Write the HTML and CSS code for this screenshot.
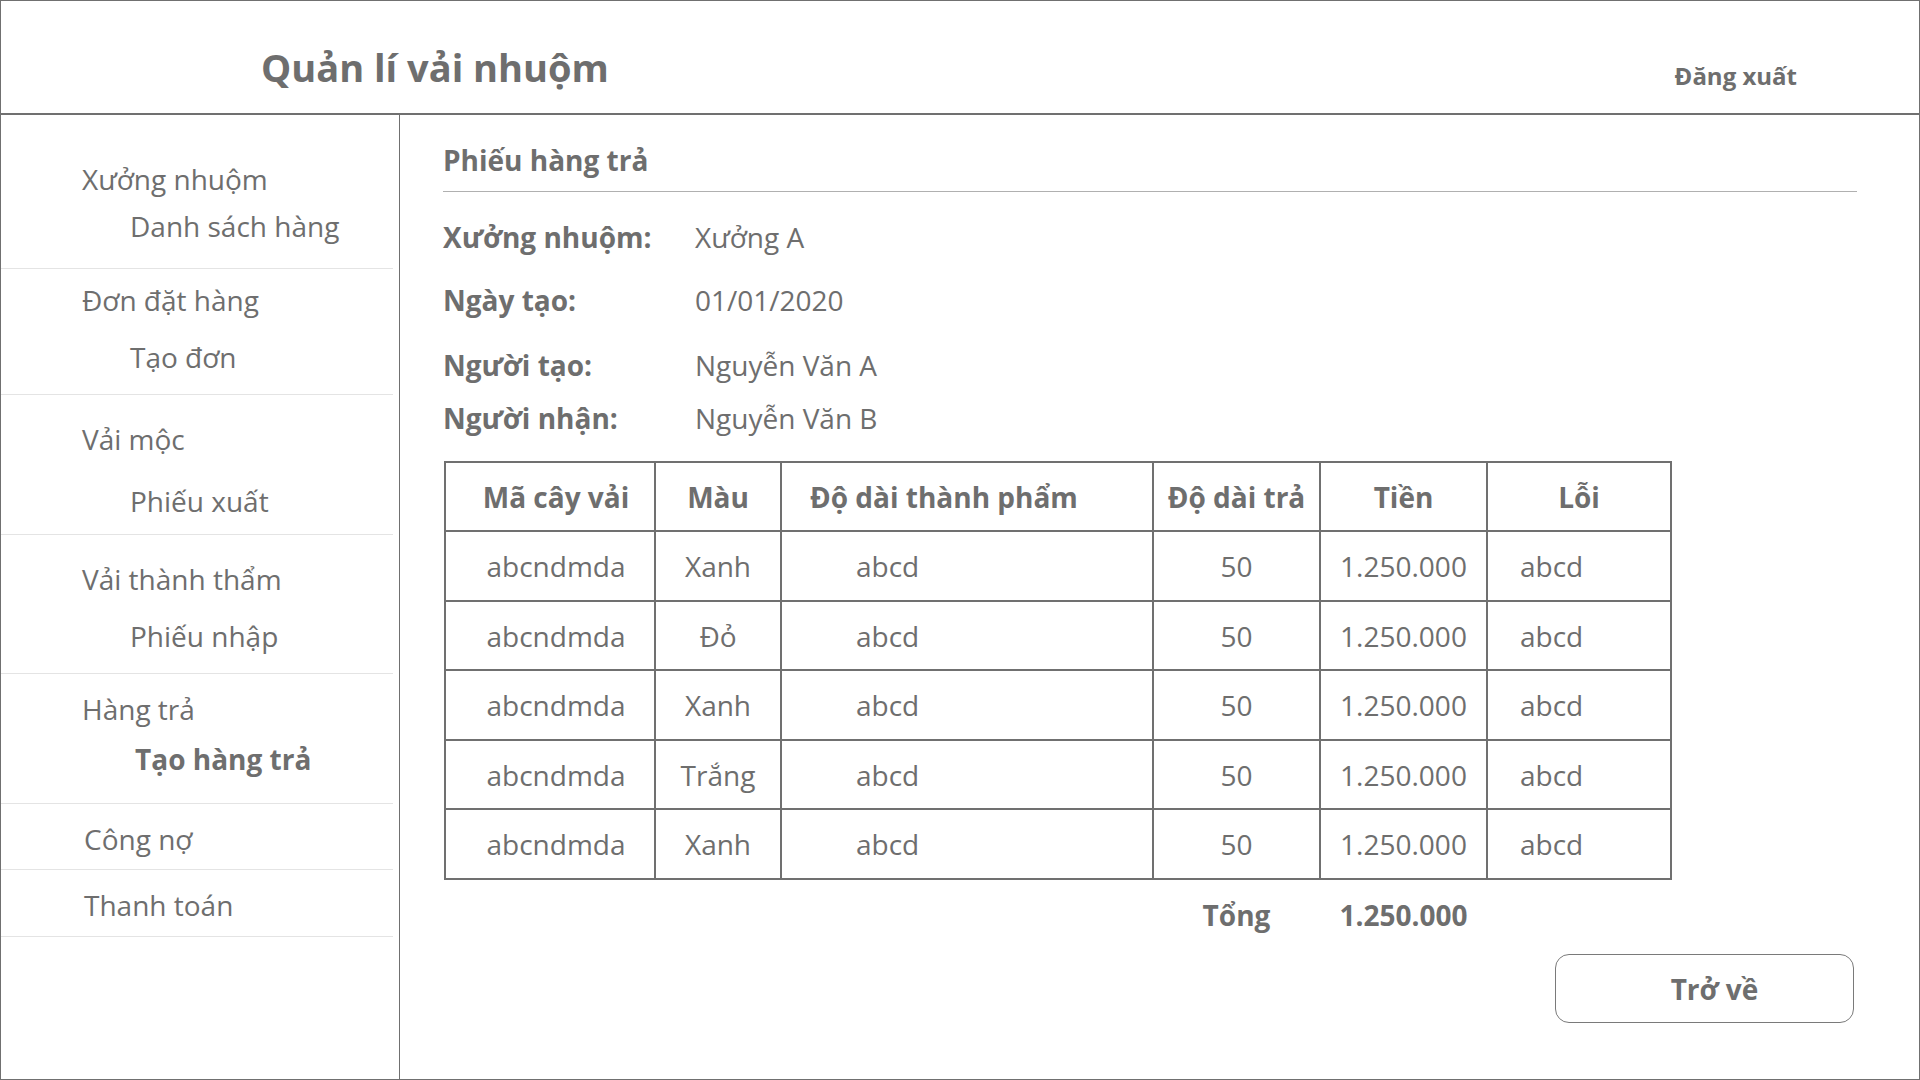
FILE: index.html
```html
<!DOCTYPE html>
<html lang="vi">
<head>
<meta charset="utf-8">
<title>Quản lí vải nhuộm</title>
<link rel="stylesheet" href="styles.css">
</head>
<body>
<div class="app">
  <header class="topbar">
    <h1 class="brand">Quản lí vải nhuộm</h1>
    <a class="logout">Đăng xuất</a>
  </header>
  <div class="workspace">
    <nav class="sidebar">
      <div class="nav-group g1">
        <div class="nav-item">Xưởng nhuộm</div>
        <div class="nav-sub">Danh sách hàng</div>
      </div>
      <div class="nav-group g2">
        <div class="nav-item">Đơn đặt hàng</div>
        <div class="nav-sub">Tạo đơn</div>
      </div>
      <div class="nav-group g3">
        <div class="nav-item">Vải mộc</div>
        <div class="nav-sub">Phiếu xuất</div>
      </div>
      <div class="nav-group g4">
        <div class="nav-item">Vải thành thẩm</div>
        <div class="nav-sub">Phiếu nhập</div>
      </div>
      <div class="nav-group g5">
        <div class="nav-item">Hàng trả</div>
        <div class="nav-sub active">Tạo hàng trả</div>
      </div>
      <div class="nav-group g6">
        <div class="nav-item single">Công nợ</div>
      </div>
      <div class="nav-group g7">
        <div class="nav-item single">Thanh toán</div>
      </div>
    </nav>
    <main class="content">
      <h2 class="section-title">Phiếu hàng trả</h2>
      <dl class="info">
        <dt>Xưởng nhuộm:</dt><dd>Xưởng A</dd>
        <dt>Ngày tạo:</dt><dd>01/01/2020</dd>
        <dt>Người tạo:</dt><dd>Nguyễn Văn A</dd>
        <dt>Người nhận:</dt><dd>Nguyễn Văn B</dd>
      </dl>
      <table class="items">
        <colgroup>
          <col class="c-code"><col class="c-color"><col class="c-len"><col class="c-ret"><col class="c-money"><col class="c-err">
        </colgroup>
        <thead>
          <tr>
            <th class="code">Mã cây vải</th>
            <th>Màu</th>
            <th class="left-h">Độ dài thành phẩm</th>
            <th>Độ dài trả</th>
            <th>Tiền</th>
            <th>Lỗi</th>
          </tr>
        </thead>
        <tbody>
          <tr><td class="code">abcndmda</td><td>Xanh</td><td class="left-b">abcd</td><td>50</td><td>1.250.000</td><td class="left-e">abcd</td></tr>
          <tr><td class="code">abcndmda</td><td>Đỏ</td><td class="left-b">abcd</td><td>50</td><td>1.250.000</td><td class="left-e">abcd</td></tr>
          <tr><td class="code">abcndmda</td><td>Xanh</td><td class="left-b">abcd</td><td>50</td><td>1.250.000</td><td class="left-e">abcd</td></tr>
          <tr><td class="code">abcndmda</td><td>Trắng</td><td class="left-b">abcd</td><td>50</td><td>1.250.000</td><td class="left-e">abcd</td></tr>
          <tr><td class="code">abcndmda</td><td>Xanh</td><td class="left-b">abcd</td><td>50</td><td>1.250.000</td><td class="left-e">abcd</td></tr>
        </tbody>
        <tfoot>
          <tr><td></td><td></td><td></td><td class="total">Tổng</td><td class="total">1.250.000</td><td></td></tr>
        </tfoot>
      </table>
      <div class="actions">
        <button class="btn" type="button">Trở về</button>
      </div>
    </main>
  </div>
</div>
</body>
</html>
```
FILE: styles.css
```css
* { box-sizing: border-box; }

html, body {
  margin: 0;
  padding: 0;
  background: #ffffff;
}

body {
  font-family: "Open Sans", "Noto Sans", sans-serif;
  color: #6e6e6e;
}

.app {
  width: 1920px;
  height: 1080px;
  border: 1px solid #707070;
  display: flex;
  flex-direction: column;
  overflow: hidden;
}

/* Header */
.topbar {
  height: 114px;
  flex: none;
  border-bottom: 2px solid #707070;
  display: flex;
  justify-content: space-between;
  align-items: flex-start;
}

.brand {
  margin: 47px 0 0 260px;
  font-size: 38px;
  line-height: 38px;
  font-weight: 700;
}

.logout {
  margin: 62px 122px 0 0;
  font-size: 24px;
  line-height: 26px;
  font-weight: 700;
  cursor: pointer;
}

/* Body */
.workspace {
  flex: 1;
  display: flex;
  min-height: 0;
}

.sidebar {
  width: 399px;
  flex: none;
  border-right: 1px solid #707070;
}

.nav-group {
  margin-right: 6px;
  border-bottom: 1px solid #e4e4e4;
  padding-top: var(--pt);
  padding-bottom: var(--pb);
  font-size: 28px;
  line-height: 40px;
}

.nav-item { padding-left: 81px; }
.nav-item.single { padding-left: 83px; }

.nav-sub {
  padding-left: 129px;
  margin-top: var(--gap);
}

.nav-sub.active {
  padding-left: 134px;
  font-weight: 700;
}

.g1 { --pt: 44px; --gap: 7px;  --pb: 22px; }
.g2 { --pt: 11px; --gap: 17px; --pb: 17px; }
.g3 { --pt: 24px; --gap: 22px; --pb: 13px; }
.g4 { --pt: 24px; --gap: 17px; --pb: 17px; }
.g5 { --pt: 15px; --gap: 10px; --pb: 24px; }
.g6 { --pt: 15px; --pb: 10px; }
.g7 { --pt: 15px; --pb: 11px; }

/* Content */
.content {
  flex: 1;
  padding: 25px 62px 0 43px;
  display: flex;
  flex-direction: column;
  align-items: stretch;
}

.section-title {
  margin: 0;
  font-size: 28px;
  line-height: 40px;
  font-weight: 700;
  padding-bottom: 11px;
  border-bottom: 1px solid #b0b0b0;
}

.info {
  margin: 25px 0 0 0;
  display: grid;
  grid-template-columns: 252px auto;
  grid-template-rows: 63px 65px 53px 40px;
  align-items: start;
  font-size: 28px;
  line-height: 40px;
}

.info dt { font-weight: 700; }
.info dd { margin: 0; }

/* Table */
.items {
  margin: 23px 0 0 1px;
  width: 1226px;
  border-collapse: collapse;
  table-layout: fixed;
  font-size: 28px;
  line-height: 40px;
}

.c-code  { width: 210px; }
.c-color { width: 126px; }
.c-len   { width: 372px; }
.c-ret   { width: 167px; }
.c-money { width: 167px; }
.c-err   { width: 184px; }

.items thead tr { height: 69px; }
.items tbody tr { height: 70px; }
.items tbody tr:nth-child(even) { height: 69px; }

.items th,
.items tbody td {
  border: 2px solid #707070;
  text-align: center;
  padding: 0;
  white-space: nowrap;
}

.items th { font-weight: 700; }

.items .code { padding-left: 12px; }
.items .left-h { text-align: left; padding-left: 28px; }
.items .left-b { text-align: left; padding-left: 74px; }
.items .left-e { text-align: left; padding-left: 32px; }

.items tfoot td {
  border: none;
  padding: 15px 0 0 0;
  text-align: center;
}

.items tfoot .total { font-weight: 700; }

/* Actions */
.actions {
  display: flex;
  justify-content: flex-end;
  margin: 19px 3px 0 0;
}

.btn {
  width: 299px;
  height: 69px;
  border: 1px solid #7a7a7a;
  border-radius: 14px;
  background: #ffffff;
  color: #6e6e6e;
  font-family: "Open Sans", "Noto Sans", sans-serif;
  font-size: 28px;
  line-height: 40px;
  font-weight: 700;
  padding: 0 0 0 20px;
}
```
